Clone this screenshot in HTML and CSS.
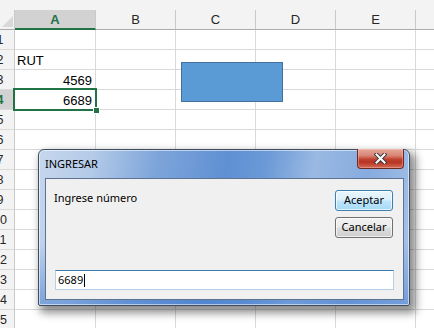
FILE: index.html
```html
<!DOCTYPE html>
<html lang="es">
<head>
<meta charset="utf-8">
<title>Excel - INGRESAR</title>
<link rel="stylesheet" href="styles.css">
</head>
<body>
<div class="app">
  <div class="topstrip"></div>
  <div class="sheet">
    <div class="ch corner"></div>
    <div class="ch sel">A</div>
    <div class="ch">B</div>
    <div class="ch">C</div>
    <div class="ch">D</div>
    <div class="ch">E</div>
    <div class="ch last"></div>

    <div class="rh"><span>1</span></div><div class="c"></div><div class="c"></div><div class="c"></div><div class="c"></div><div class="c"></div><div class="c last"></div>
    <div class="rh"><span>2</span></div><div class="c">RUT</div><div class="c"></div><div class="c"></div><div class="c"></div><div class="c"></div><div class="c last"></div>
    <div class="rh"><span>3</span></div><div class="c num">4569</div><div class="c"></div><div class="c"></div><div class="c"></div><div class="c"></div><div class="c last"></div>
    <div class="rh sel"><span>4</span></div><div class="c num">6689</div><div class="c"></div><div class="c"></div><div class="c"></div><div class="c"></div><div class="c last"></div>
    <div class="rh"><span>5</span></div><div class="c"></div><div class="c"></div><div class="c"></div><div class="c"></div><div class="c"></div><div class="c last"></div>
    <div class="rh"><span>6</span></div><div class="c"></div><div class="c"></div><div class="c"></div><div class="c"></div><div class="c"></div><div class="c last"></div>
    <div class="rh"><span>7</span></div><div class="c"></div><div class="c"></div><div class="c"></div><div class="c"></div><div class="c"></div><div class="c last"></div>
    <div class="rh"><span>8</span></div><div class="c"></div><div class="c"></div><div class="c"></div><div class="c"></div><div class="c"></div><div class="c last"></div>
    <div class="rh"><span>9</span></div><div class="c"></div><div class="c"></div><div class="c"></div><div class="c"></div><div class="c"></div><div class="c last"></div>
    <div class="rh"><span>10</span></div><div class="c"></div><div class="c"></div><div class="c"></div><div class="c"></div><div class="c"></div><div class="c last"></div>
    <div class="rh"><span>11</span></div><div class="c"></div><div class="c"></div><div class="c"></div><div class="c"></div><div class="c"></div><div class="c last"></div>
    <div class="rh"><span>12</span></div><div class="c"></div><div class="c"></div><div class="c"></div><div class="c"></div><div class="c"></div><div class="c last"></div>
    <div class="rh"><span>13</span></div><div class="c"></div><div class="c"></div><div class="c"></div><div class="c"></div><div class="c"></div><div class="c last"></div>
    <div class="rh"><span>14</span></div><div class="c"></div><div class="c"></div><div class="c"></div><div class="c"></div><div class="c"></div><div class="c last"></div>
    <div class="rh"><span>15</span></div><div class="c"></div><div class="c"></div><div class="c"></div><div class="c"></div><div class="c"></div><div class="c last"></div>

    <div class="selection"><div class="handle"></div></div>
    <div class="shape"></div>
  </div>

  <div class="dialog">
    <div class="titlebar">
      <div class="title">INGRESAR</div>
      <div class="close">
        <svg width="13" height="11" viewBox="0 0 13 11">
          <path d="M2.5 1.5 L10.5 9.5 M10.5 1.5 L2.5 9.5" stroke="#3b3b3b" stroke-width="4" stroke-linecap="square" fill="none"/>
          <path d="M2.5 1.5 L10.5 9.5 M10.5 1.5 L2.5 9.5" stroke="#ffffff" stroke-width="2" stroke-linecap="square" fill="none"/>
        </svg>
      </div>
    </div>
    <div class="panel">
      <div class="toprow">
        <div class="prompt">Ingrese número</div>
        <div class="buttons">
          <div class="btn default">Aceptar</div>
          <div class="btn">Cancelar</div>
        </div>
      </div>
      <div class="input">6689<span class="caret"></span></div>
    </div>
  </div>
</div>
</body>
</html>
```

FILE: styles.css
```css
* { box-sizing: border-box; }
html, body { margin: 0; padding: 0; }
body { width: 434px; height: 328px; overflow: hidden; background: #ffffff; }

.app { position: relative; width: 434px; height: 328px; overflow: hidden; }

.topstrip { height: 10px; background: #f3f3f3; }

.sheet {
  position: relative;
  display: grid;
  grid-template-columns: 15px 81px 80px 80px 80px 80px 18px;
  grid-auto-rows: 20px;
  font-family: "Liberation Sans", Arial, sans-serif;
  font-size: 13px;
  color: #000;
}

.ch {
  background: #f3f3f3;
  border-right: 1px solid #c9c9c9;
  border-bottom: 1px solid #ababab;
  text-align: center;
  line-height: 19px;
  color: #262626;
}
.ch.last { border-right: none; }
.ch.sel {
  background: #d2d2d2;
  color: #217346;
  font-weight: bold;
  border-bottom: 2px solid #217346;
}
.ch.corner { position: relative; }
.ch.corner::after {
  content: "";
  position: absolute;
  right: 1px;
  bottom: 2px;
  width: 11px;
  height: 11px;
  background: #d9d9d9;
  clip-path: polygon(100% 0, 100% 100%, 0 100%);
}

.rh {
  background: #f3f3f3;
  border-right: 1px solid #c9c9c9;
  border-bottom: 1px solid #dadada;
  overflow: hidden;
  line-height: 21px;
  color: #262626;
  font-size: 12.5px;
}
.rh span {
  display: block;
  width: 30px;
  margin-left: -15px;
  text-align: center;
}
.rh.sel { background: #d2d2d2; color: #217346; font-weight: bold; }

.c {
  border-right: 1px solid #d9d9d9;
  border-bottom: 1px solid #d9d9d9;
  line-height: 21px;
  padding: 0 3px 0 2px;
  white-space: nowrap;
  overflow: hidden;
}
.c.last { border-right: none; }
.c.num { text-align: right; }

.selection {
  position: absolute;
  left: 13px;
  top: 78px;
  width: 84px;
  height: 23px;
  border: 2px solid #217346;
}
.handle {
  position: absolute;
  right: -5px;
  bottom: -5px;
  width: 7px;
  height: 7px;
  background: #217346;
  border: 1px solid #ffffff;
}

.shape {
  position: absolute;
  left: 181px;
  top: 52px;
  width: 102px;
  height: 40px;
  background: #5b9bd5;
  border: 1px solid #41719c;
}

/* Dialog */
.dialog {
  position: absolute;
  left: 38px;
  top: 149px;
  width: 372px;
  height: 157px;
  display: flex;
  flex-direction: column;
  border: 1px solid #3f4d60;
  border-radius: 6px 6px 2px 2px;
  background:
    linear-gradient(to bottom, rgba(255,255,255,0) 60%, rgba(70,125,205,0.55) 100%),
    linear-gradient(100deg, #c6d7ed 0%, #b3cae8 14%, #7ea5da 30%, #5f90d3 48%, #6c9ad7 58%, #9ab9e3 70%, #86abde 84%, #a9c4e8 100%);
  box-shadow: 4px 5px 9px 2px rgba(0,0,0,0.45), inset 0 0 0 1px rgba(255,255,255,0.55);
  font-family: "Noto Sans", "Segoe UI", sans-serif;
  font-size: 11px;
  color: #000;
}

.titlebar {
  height: 28px;
  display: flex;
  justify-content: space-between;
  align-items: flex-start;
  padding-left: 6px;
}
.title {
  padding-top: 6px;
  line-height: 15px;
  color: #000;
}
.close {
  margin-top: -1px;
  margin-right: 5px;
  width: 47px;
  height: 20px;
  display: flex;
  align-items: center;
  justify-content: center;
  border: 1px solid #6b2a22;
  border-top: none;
  border-radius: 0 0 4px 4px;
  background: linear-gradient(to bottom, #e6a99c 0%, #d88474 35%, #c0402e 55%, #b83422 70%, #d26c58 100%);
  box-shadow: inset 0 0 0 1px rgba(255,200,190,0.4);
}
.close svg { display: block; }

.panel {
  margin: 0 5px 5px 6px;
  flex: 1;
  background: #f0f0f0;
  border: 1px solid #5e7392;
  padding: 11px 9px 9px 9px;
  display: flex;
  flex-direction: column;
}

.toprow {
  display: flex;
  justify-content: space-between;
  align-items: flex-start;
}
.prompt {
  margin-left: -1px;
  line-height: 15px;
}
.buttons {
  display: flex;
  flex-direction: column;
  gap: 6px;
  margin-right: 1px;
}
.btn {
  width: 58px;
  height: 21px;
  border: 1px solid #707070;
  border-radius: 3px;
  text-align: center;
  line-height: 18px;
  background: linear-gradient(to bottom, #f2f2f2 0%, #ebebeb 48%, #dddddd 52%, #cfcfcf 100%);
  box-shadow: inset 0 0 0 1px rgba(255,255,255,0.7);
}
.btn.default {
  border-color: #3c7fb1;
  background: linear-gradient(to bottom, #eaf6fd 0%, #d9f0fc 48%, #bee6fd 52%, #a7d9f5 100%);
}

.input {
  margin-top: auto;
  height: 20px;
  background: #ffffff;
  border: 1px solid #b5cfe7;
  border-top-color: #3d7bad;
  padding-left: 2px;
  line-height: 18px;
  display: flex;
  align-items: center;
}
.caret {
  display: inline-block;
  width: 1px;
  height: 13px;
  background: #000;
  margin-left: 1px;
}
```
